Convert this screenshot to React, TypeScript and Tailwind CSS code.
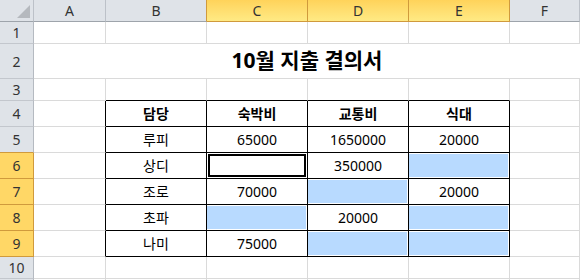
import React from 'react';

type Col = { key: string; w: string; sel: boolean };

const cols: Col[] = [
  { key: 'A', w: 'w-[72px]', sel: false },
  { key: 'B', w: 'w-[101px]', sel: false },
  { key: 'C', w: 'w-[101px]', sel: true },
  { key: 'D', w: 'w-[101px]', sel: true },
  { key: 'E', w: 'w-[101px]', sel: true },
  { key: 'F', w: 'w-[70px]', sel: false },
];

// '#' = selected (blue), '@' = active cell
const table: Record<number, string[]> = {
  4: ['담당', '숙박비', '교통비', '식대'],
  5: ['루피', '65000', '1650000', '20000'],
  6: ['상디', '@', '350000', '#'],
  7: ['조로', '70000', '#', '20000'],
  8: ['초파', '#', '20000', '#'],
  9: ['나미', '75000', '#', '#'],
};

const rows = [
  { n: 1, h: 'h-[22px]' },
  { n: 2, h: 'h-[35px]' },
  { n: 3, h: 'h-[22px]' },
  { n: 4, h: 'h-[26px]' },
  { n: 5, h: 'h-[26px]' },
  { n: 6, h: 'h-[26px]' },
  { n: 7, h: 'h-[26px]' },
  { n: 8, h: 'h-[26px]' },
  { n: 9, h: 'h-[26px]' },
  { n: 10, h: 'h-[22px]' },
  { n: 11, h: 'h-[22px]' },
];

const selRows = [6, 7, 8, 9];

const ColHeader: React.FC<{ col: Col; next?: Col }> = ({ col, next }) => {
  const right = col.sel || next?.sel ? 'border-r-[#d09a3c]' : 'border-r-[#bcc1c8]';
  return (
    <div
      className={`${col.w} h-[22px] shrink-0 flex items-center justify-center border-r border-b ${right} ${
        col.sel
          ? 'bg-gradient-to-b from-[#ffd35a] to-[#ffea84] border-b-[#d09a3c]'
          : 'bg-[#dfe3e8] border-b-[#9ea4ab]'
      }`}
    >
      {col.key}
    </div>
  );
};

const RowHeader: React.FC<{ n: number; h: string }> = ({ n, h }) => {
  const sel = selRows.includes(n);
  const bottom = sel || n === 5 ? 'border-b-[#d09a3c]' : 'border-b-[#c3c7cd]';
  return (
    <div
      className={`w-[34px] ${h} shrink-0 flex items-center justify-center border-r border-b ${bottom} ${
        sel ? 'bg-[#ffd766] border-r-[#d09a3c]' : 'bg-[#dfe3e8] border-r-[#b5bac1]'
      }`}
    >
      {/* row 11 sits below the window edge, only its top shows */}
      {n <= 10 ? n : ''}
    </div>
  );
};

const Cell: React.FC<{ col: Col; ci: number; row: number; h: string }> = ({ col, ci, row, h }) => {
  const inTableRow = row >= 4 && row <= 9;
  const rightBlack = inTableRow && ci <= 4;
  const bottomBlack = ci >= 1 && ci <= 4 && row >= 3 && row <= 9;
  const value = inTableRow && ci >= 1 && ci <= 4 ? table[row][ci - 1] : '';

  let content: React.ReactNode = value;
  if (value === '#') {
    content = <div className="h-full w-full bg-[#b8daff]" />;
  } else if (value === '@') {
    content = <div className="h-full w-full border-2 border-black bg-white" />;
  }

  const special = value === '#' || value === '@';

  return (
    <div
      className={`${col.w} ${h} shrink-0 border-r border-b bg-white ${
        rightBlack ? 'border-r-black' : 'border-r-[#dadada]'
      } ${bottomBlack ? 'border-b-black' : 'border-b-[#dadada]'} ${
        value === '#' ? 'pt-px pr-px pb-px' : value === '@' ? 'p-px' : 'flex items-center justify-center'
      } ${row === 4 ? 'font-bold' : ''} text-black`}
    >
      {special ? content : value}
    </div>
  );
};

export default function App() {
  return (
    <div className="w-[580px] h-[280px] overflow-hidden bg-white font-['Noto_Sans','Noto_Sans_CJK_KR',sans-serif] text-[14px] text-[#333]">
      <div className="flex">
        <div className="w-[34px] h-[22px] shrink-0 relative bg-[#dfe3e8] border-r border-b border-r-[#bcc1c8] border-b-[#9ea4ab]">
          <svg className="absolute right-[3px] bottom-[3px]" width="13" height="13" viewBox="0 0 13 13">
            <polygon points="13,0 13,13 0,13" fill="#b5b9be" />
          </svg>
        </div>
        {cols.map((c, i) => (
          <ColHeader key={c.key} col={c} next={cols[i + 1]} />
        ))}
      </div>
      {rows.map((r) => (
        <div key={r.n} className="flex">
          <RowHeader n={r.n} h={r.h} />
          {r.n === 2 ? (
            <div className={`flex-1 ${r.h} border-b border-b-[#dadada] flex items-center justify-center font-bold text-[21px] text-black`}>
              10월 지출 결의서
            </div>
          ) : (
            cols.map((c, ci) => <Cell key={c.key} col={c} ci={ci} row={r.n} h={r.h} />)
          )}
        </div>
      ))}
    </div>
  );
}
